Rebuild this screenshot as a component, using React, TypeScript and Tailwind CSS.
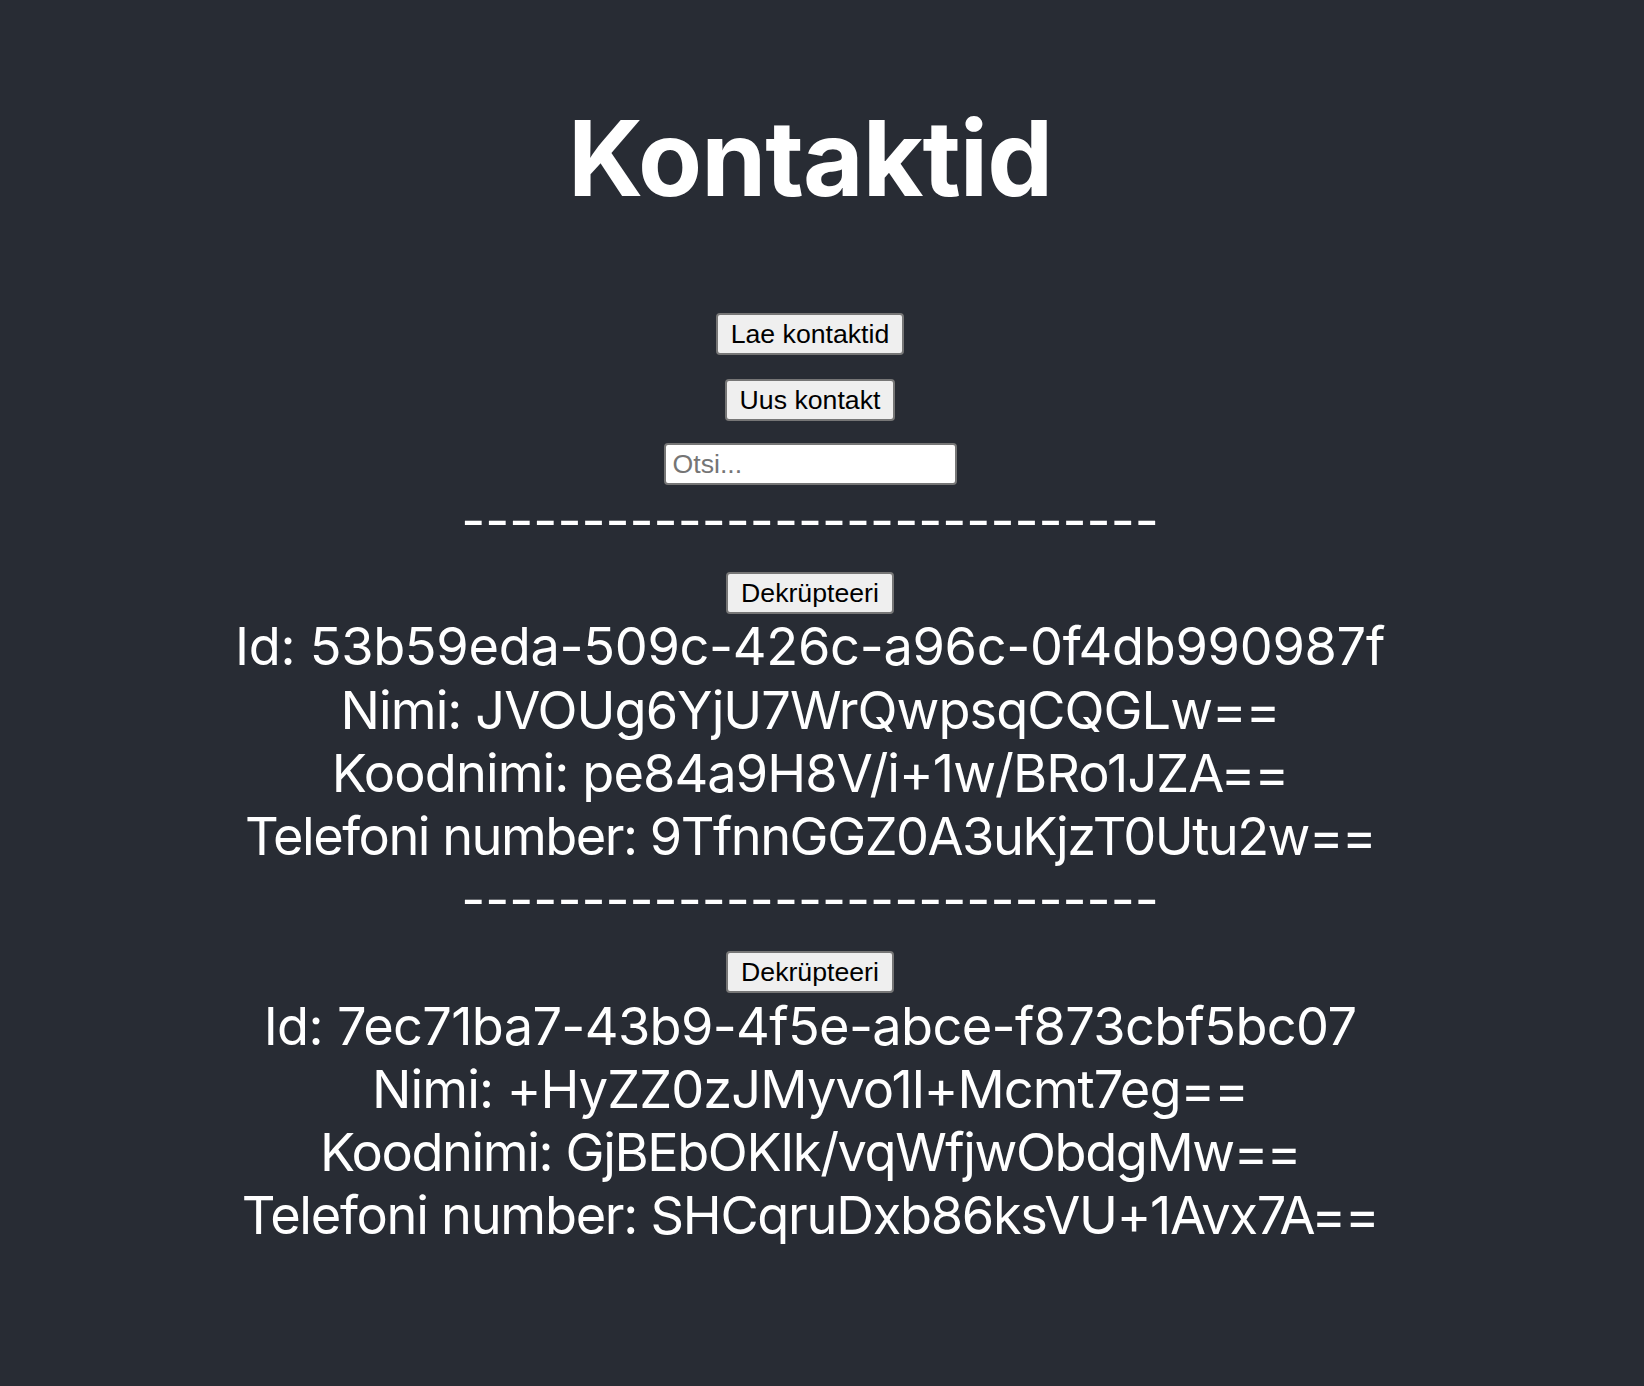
import React from "react";

type Line = { text: string; cls: string };

const contacts: { key: string; lines: Line[] }[] = [
  {
    key: "a",
    lines: [
      { text: "Id: 53b59eda-509c-426c-a96c-0f4db990987f", cls: "tracking-[-0.3px]" },
      { text: "Nimi: JVOUg6YjU7WrQwpsqCQGLw==", cls: "tracking-[-0.95px]" },
      { text: "Koodnimi: pe84a9H8V/i+1w/BRo1JZA==", cls: "tracking-[-0.9px]" },
      { text: "Telefoni number: 9TfnnGGZ0A3uKjzT0Utu2w==", cls: "tracking-[-1.5px]" },
    ],
  },
  {
    key: "b",
    lines: [
      { text: "Id: 7ec71ba7-43b9-4f5e-abce-f873cbf5bc07", cls: "tracking-[-0.65px]" },
      { text: "Nimi: +HyZZ0zJMyvo1l+Mcmt7eg==", cls: "tracking-[-0.9px]" },
      { text: "Koodnimi: GjBEbOKIk/vqWfjwObdgMw==", cls: "tracking-[-1.4px]" },
      { text: "Telefoni number: SHCqruDxb86ksVU+1Avx7A==", cls: "tracking-[-1.27px]" },
    ],
  },
];

const btn =
  "inline-block h-[42px] leading-[38px] px-[13px] border-2 border-[#767676] rounded-[4px] bg-[#efefef] text-black text-[26.67px] tracking-normal font-['Liberation_Sans',Arial,sans-serif]";

export default function App() {
  return (
    <div className="min-h-screen w-full bg-[#282c34] text-white font-['Inter',sans-serif]">
      <div className="flex flex-col items-center pt-[95px] pr-[24px] pb-[120px] text-center">
        <h1 className="text-[104.6px] font-bold leading-[normal] tracking-[-1px]">Kontaktid</h1>
        <button className={`${btn} mt-[92px]`}>Lae kontaktid</button>
        <button className={`${btn} mt-[24px]`}>Uus kontakt</button>
        <input
          type="text"
          placeholder="Otsi..."
          className="mt-[22px] w-[293px] h-[42px] px-[7px] border-2 border-[#767676] rounded-[4px] bg-white text-black text-[26.67px] leading-[normal] font-['Liberation_Sans',Arial,sans-serif] placeholder:text-[#757575] outline-none"
        />
        <div className="mt-[4px] text-[52.3px] leading-[63.2px]">
          {contacts.map((c) => (
            <div key={c.key}>
              <div className="tracking-normal">-----------------------------</div>
              <div className="h-[63.2px] flex justify-center items-start pt-[20px]">
                <button className={btn}>Dekrüpteeri</button>
              </div>
              {c.lines.map((l) => (
                <div key={l.text} className={l.cls}>
                  {l.text}
                </div>
              ))}
            </div>
          ))}
        </div>
      </div>
    </div>
  );
}
